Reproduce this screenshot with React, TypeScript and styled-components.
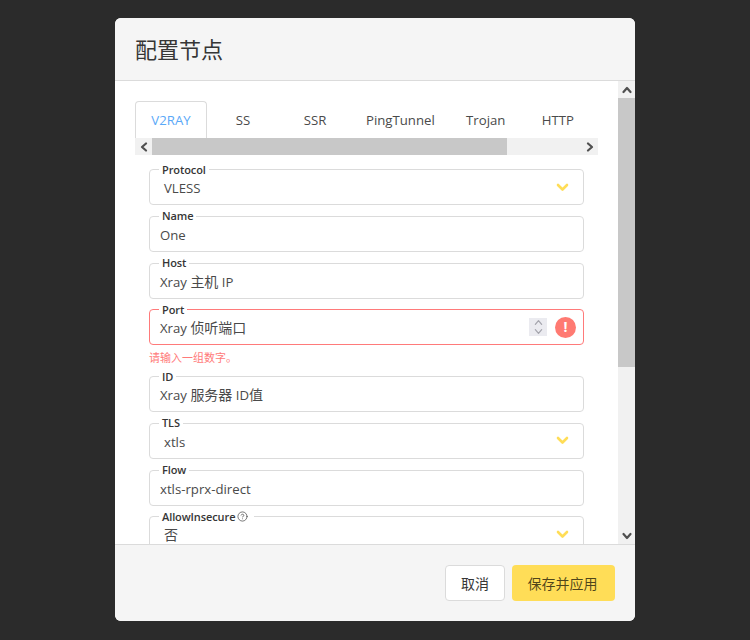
import React from 'react';
import styled, { createGlobalStyle } from 'styled-components';
import { CircleHelp } from 'lucide-react';

const GlobalStyle = createGlobalStyle`
  html, body {
    margin: 0;
    padding: 0;
    background: #2b2b2b;
  }
  * {
    box-sizing: border-box;
  }
`;

const tabs = ['V2RAY', 'SS', 'SSR', 'PingTunnel', 'Trojan', 'HTTP'];

const Chevron = ({ dir, size = 10, color = '#505050', width = 2.2 }: { dir: 'up' | 'down' | 'left' | 'right'; size?: number; color?: string; width?: number }) => {
  const points = {
    up: '1.5,7 5,3 8.5,7',
    down: '1.5,3 5,7 8.5,3',
    left: '7,1.5 3,5 7,8.5',
    right: '3,1.5 7,5 3,8.5',
  }[dir];
  return (
    <svg width={size} height={size} viewBox="0 0 10 10" fill="none">
      <polyline points={points} stroke={color} strokeWidth={width} strokeLinecap="round" strokeLinejoin="round" />
    </svg>
  );
};

const Field = ({ label, error, help, children }: { label: string; error?: boolean; help?: boolean; children: React.ReactNode }) => (
  <FieldBox $error={error}>
    <FieldLegend>
      {label}
      {help && (
        <HelpMark>
          <CircleHelp size={11} strokeWidth={1.6} />
        </HelpMark>
      )}
    </FieldLegend>
    <FieldRow>{children}</FieldRow>
  </FieldBox>
);

const SelectValue = ({ children }: { children: React.ReactNode }) => (
  <>
    <Value $select>{children}</Value>
    <SelectArrow>
      <svg width="13" height="9" viewBox="0 0 13 9" fill="none">
        <polyline points="2,2 6.5,6.5 11,2" stroke="#ffdd57" strokeWidth="2.6" strokeLinecap="round" strokeLinejoin="round" />
      </svg>
    </SelectArrow>
  </>
);

export default function App() {
  return (
    <>
      <GlobalStyle />
      <Overlay>
        <Modal>
          <Header>
            <Title>配置节点</Title>
          </Header>
          <Body>
            <Content>
              <TabList>
                {tabs.map((tab, index) => (
                  <Tab key={tab} $active={index === 0}>
                    {tab}
                  </Tab>
                ))}
              </TabList>
              <HScroll>
                <ScrollButton>
                  <Chevron dir="left" />
                </ScrollButton>
                <HThumb />
                <HTrack />
                <ScrollButton>
                  <Chevron dir="right" />
                </ScrollButton>
              </HScroll>
              <Form>
                <Field label="Protocol">
                  <SelectValue>
                    <Latin>VLESS</Latin>
                  </SelectValue>
                </Field>
                <Field label="Name">
                  <Value>
                    <Latin>One</Latin>
                  </Value>
                </Field>
                <Field label="Host">
                  <Value>
                    <Latin>Xray </Latin>主机<Latin> IP</Latin>
                  </Value>
                </Field>
                <Field label="Port" error>
                  <Value>
                    <Latin>Xray </Latin>侦听端口
                  </Value>
                  <Spinner>
                    <Chevron dir="up" size={9} color="#a5a5ad" width={1.4} />
                    <Chevron dir="down" size={9} color="#a5a5ad" width={1.4} />
                  </Spinner>
                  <ErrorIcon>!</ErrorIcon>
                </Field>
                <ErrorText>请输入一组数字。</ErrorText>
                <Field label="ID">
                  <Value>
                    <Latin>Xray </Latin>服务器<Latin> ID</Latin>值
                  </Value>
                </Field>
                <Field label="TLS">
                  <SelectValue>
                    <Latin>xtls</Latin>
                  </SelectValue>
                </Field>
                <Field label="Flow">
                  <Value>
                    <Latin>xtls-rprx-direct</Latin>
                  </Value>
                </Field>
                <Field label="AllowInsecure" help>
                  <SelectValue>否</SelectValue>
                </Field>
              </Form>
            </Content>
            <VScroll>
              <ScrollButton>
                <Chevron dir="up" />
              </ScrollButton>
              <VThumb />
              <VTrack />
              <ScrollButton>
                <Chevron dir="down" />
              </ScrollButton>
            </VScroll>
          </Body>
          <Footer>
            <CancelButton>取消</CancelButton>
            <SaveButton>保存并应用</SaveButton>
          </Footer>
        </Modal>
      </Overlay>
    </>
  );
}

const Overlay = styled.div`
  height: 640px;
  padding-top: 18px;
  display: flex;
  justify-content: center;
  align-items: flex-start;
  background: #2b2b2b;
  font-family: 'Open Sans', 'Noto Sans CJK SC', sans-serif;
  color: #363636;
  overflow: hidden;
`;

const Modal = styled.div`
  width: 520px;
  height: 603px;
  display: flex;
  flex-direction: column;
  border-radius: 6px;
  overflow: hidden;
  background: #fff;
`;

const Header = styled.header`
  flex: none;
  height: 63px;
  padding: 0 20px;
  display: flex;
  align-items: center;
  background: #f5f5f5;
  border-bottom: 1px solid #dbdbdb;
`;

const Title = styled.h1`
  margin: 0;
  font-size: 22px;
  font-weight: 400;
  line-height: 1;
  color: #363636;
`;

const Body = styled.div`
  flex: 1;
  min-height: 0;
  display: flex;
`;

const Content = styled.div`
  flex: 1;
  min-width: 0;
  padding: 20px 20px 0;
  overflow: hidden;
`;

const TabList = styled.div`
  display: flex;
  height: 37px;
`;

const Tab = styled.div<{ $active?: boolean }>`
  min-width: 72px;
  flex: none;
  padding: 0 14px;
  display: flex;
  align-items: center;
  justify-content: center;
  font-size: 13.2px;
  white-space: nowrap;
  color: ${(p) => (p.$active ? '#5aa9f8' : '#4a4a4a')};
  background: #fff;
  border: 1px solid ${(p) => (p.$active ? '#dbdbdb' : 'transparent')};
  border-bottom: 0;
  border-radius: 4px 4px 0 0;
`;

const HScroll = styled.div`
  display: flex;
  height: 17px;
`;

const ScrollButton = styled.div`
  flex: none;
  width: 17px;
  height: 17px;
  display: flex;
  align-items: center;
  justify-content: center;
  background: #f1f1f1;
`;

const HThumb = styled.div`
  width: 355px;
  flex: none;
  background: #c8c8c8;
`;

const HTrack = styled.div`
  flex: 1;
  background: #f1f1f1;
`;

const VScroll = styled.div`
  width: 17px;
  flex: none;
  display: flex;
  flex-direction: column;
`;

const VThumb = styled.div`
  height: 269px;
  flex: none;
  background: #c8c8c8;
`;

const VTrack = styled.div`
  flex: 1;
  background: #f1f1f1;
`;

const Form = styled.div`
  padding: 7.8px 14px 0;
`;

const FieldBox = styled.fieldset<{ $error?: boolean }>`
  margin: 0 0 4.167px;
  padding: 0 0 0 10px;
  min-width: 0;
  height: 42.5px;
  border: 1px solid ${(p) => (p.$error ? '#ff7a7a' : '#dbdbdb')};
  border-radius: 4px;
`;

const FieldLegend = styled.legend`
  margin-left: -1px;
  padding: 0 3px;
  height: 14px;
  line-height: 13px;
  font-size: 11px;
  font-weight: 600;
  letter-spacing: -0.1px;
  color: #363636;
  display: flex;
  align-items: flex-start;
`;

const HelpMark = styled.span`
  display: inline-flex;
  margin: 1px 3px 0 2px;
  color: #4a4a4a;
`;

const FieldRow = styled.div`
  height: 24px;
  margin-top: -1.5px;
  display: flex;
  align-items: center;
`;

const Value = styled.div<{ $select?: boolean }>`
  flex: 1;
  min-width: 0;
  padding: 2px 0 0 ${(p) => (p.$select ? '4px' : '0')};
  font-size: 14px;
  line-height: 20px;
  color: #4a4a4a;
  white-space: pre;
`;

const Latin = styled.span`
  font-size: 13.2px;
`;

const SelectArrow = styled.div`
  flex: none;
  width: 13px;
  height: 9px;
  margin-right: 14px;
  display: flex;
`;

const Spinner = styled.div`
  flex: none;
  width: 18px;
  height: 18px;
  display: flex;
  flex-direction: column;
  align-items: center;
  justify-content: center;
  background: #ebebf0;
`;

const ErrorIcon = styled.div`
  flex: none;
  width: 21px;
  height: 21px;
  margin: 0 7px 0 8px;
  border-radius: 50%;
  display: flex;
  align-items: center;
  justify-content: center;
  background: #ff7a72;
  color: #fff;
  font-size: 14px;
  font-weight: 700;
  line-height: 1;
`;

const ErrorText = styled.div`
  height: 20.333px;
  font-size: 11px;
  line-height: 18px;
  color: #ff7a7a;
`;

const Footer = styled.footer`
  flex: none;
  height: 77px;
  padding: 20px;
  display: flex;
  justify-content: flex-end;
  gap: 7px;
  background: #f5f5f5;
  border-top: 1px solid #dbdbdb;
`;

const CancelButton = styled.button`
  width: 60px;
  height: 36px;
  padding: 0;
  font: inherit;
  font-size: 14px;
  color: #363636;
  background: #fff;
  border: 1px solid #dbdbdb;
  border-radius: 4px;
`;

const SaveButton = styled(CancelButton)`
  width: 103px;
  padding-right: 2px;
  color: rgba(0, 0, 0, 0.7);
  background: #ffdd57;
  border-color: transparent;
`;
